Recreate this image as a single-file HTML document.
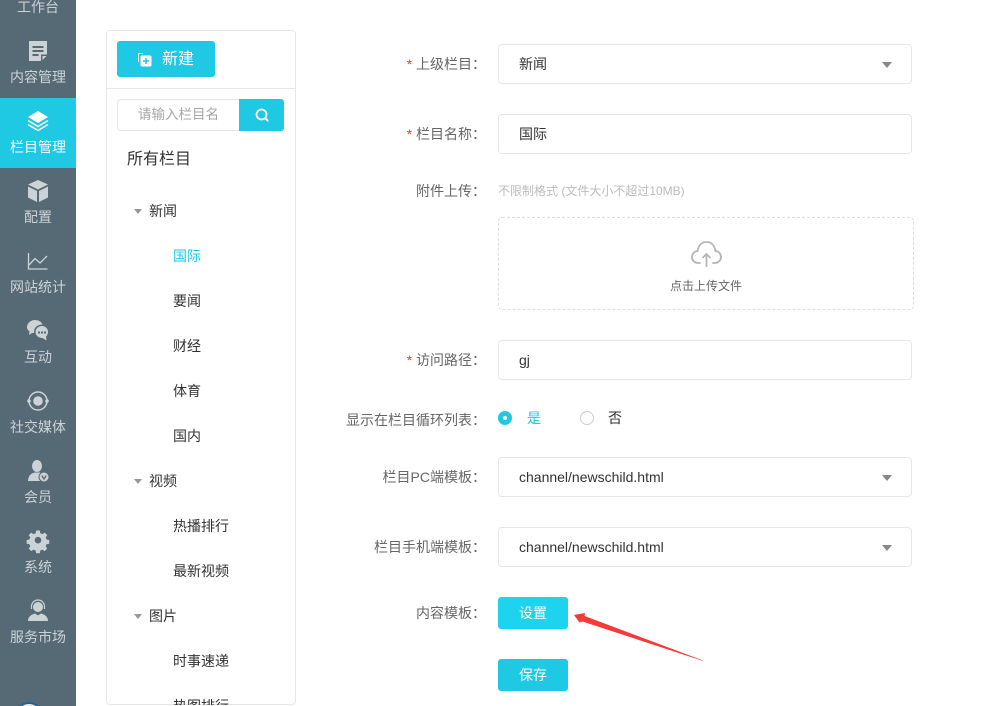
<!DOCTYPE html>
<html lang="zh">
<head>
<meta charset="utf-8">
<style>
html,body{margin:0;padding:0;background:#fff}
body{width:1006px;height:706px;position:relative;overflow:hidden;font-family:"Liberation Sans","Noto Sans CJK SC",sans-serif;font-size:14px;color:#333}
.a{position:absolute;white-space:nowrap;line-height:20px}
#nav{position:absolute;left:0;top:0;width:76px;height:706px;background:#566a75;overflow:hidden}
#nav .t{position:absolute;left:0;width:76px;text-align:center;color:#ccd3d7;line-height:20px;font-size:14px}
#nav svg{position:absolute;left:24px;width:28px;height:28px}
#act{position:absolute;left:0;top:98px;width:76px;height:70px;background:#1fc8e3}
#panel{position:absolute;left:106px;top:30px;width:188px;height:673px;border:1px solid #e6e6e6;border-radius:4px}
.btn{position:absolute;background:#1fc8e3;color:#fff;border-radius:3px;text-align:center}
.box{position:absolute;left:498px;width:412px;height:38px;border:1px solid #e6e6e6;border-radius:4px;line-height:38px;text-indent:20px;color:#333}
.lab{position:absolute;right:520px;color:#666;line-height:20px;white-space:nowrap}
.lab i{font-style:normal;color:#f33}
.tri{position:absolute;width:0;height:0;border-left:5px solid transparent;border-right:5px solid transparent;border-top:6px solid #888}
.tri2{border-left-width:4.5px;border-right-width:4.5px;border-top-width:5px;border-top-color:#999}
.l1{position:absolute;left:149px;line-height:20px;color:#333}
.l2{position:absolute;left:173px;line-height:20px;color:#333}
</style>
</head>
<body>
<div id="nav">
<div id="act"></div>
<div class="t" style="top:-3px">工作台</div>

<svg style="top:38px" viewBox="0 0 28 28"><path fill="#ccd3d7" d="M5 3h18v13l-6.500 7H5z"/><path fill="#566a75" d="M8.500 8h11v2h-11zM8.500 12h11v2h-11zM8.500 16h6v2h-6z"/><path fill="#566a75" d="M17 23v-6.500h6z"/><path fill="#ccd3d7" d="M18.500 22v-4h4z"/></svg>
<div class="t" style="top:67px">内容管理</div>

<svg style="top:107px" viewBox="0 0 28 28"><path fill="#fff" d="M14 4l10 6-10 6-10-6z"/><path fill="none" stroke="#fff" stroke-width="1.500" d="M4 13.500l10 6 10-6M4 17.500l10 6 10-6"/></svg>
<div class="t" style="top:137px;color:#fff">栏目管理</div>

<svg style="top:177px" viewBox="0 0 28 28"><path fill="#ccd3d7" d="M14 3l10 4.500-10 5-10-5z"/><path fill="#ccd3d7" d="M4 9.500l9 4.500v11l-9-4.500zM24 9.500l-9 4.500v11l9-4.500z"/></svg>
<div class="t" style="top:207px">配置</div>

<svg style="top:247px" viewBox="0 0 28 28"><path fill="none" stroke="#ccd3d7" stroke-width="1.300" d="M4.500 6v16h19"/><path fill="none" stroke="#ccd3d7" stroke-width="1.300" d="M5 18l6-6.500 5 4.500 7-7"/></svg>
<div class="t" style="top:277px">网站统计</div>

<svg style="top:317px" viewBox="0 0 28 28"><path fill="#ccd3d7" d="M11 3c4 0 6.500 2 7.500 4.500C13 7.500 9.500 11 10 16l-2 0-3 2 .5-3.500C3.500 13 3 11.500 3 10c0-4 4-7 8-7z"/><path fill="#ccd3d7" d="M18 9c3.500 0 6 2.500 6 6 0 2-.8 3.500-2 4.500l.5 4-4-2.500c-4 0-7-2.500-7-6s3-6 6.500-6z"/><path fill="#566a75" d="M14 14.500h2v2h-2zM17 14.500h2v2h-2zM20 14.500h2v2h-2z"/></svg>
<div class="t" style="top:347px">互动</div>

<svg style="top:387px" viewBox="0 0 28 28"><circle cx="14" cy="14" r="9" fill="none" stroke="#ccd3d7" stroke-width="1.500"/><circle cx="14" cy="14" r="4.800" fill="#ccd3d7"/><circle cx="5" cy="14" r="1.800" fill="#ccd3d7"/><circle cx="23" cy="14" r="1.800" fill="#ccd3d7"/></svg>
<div class="t" style="top:417px">社交媒体</div>

<svg style="top:457px" viewBox="0 0 28 28"><ellipse cx="13" cy="9" rx="5" ry="6" fill="#ccd3d7"/><path fill="#ccd3d7" d="M4 24c0-5 3-7.500 6.500-8.500h5C18 16.500 19 18 19 24z"/><circle cx="20" cy="20" r="5" fill="#ccd3d7" stroke="#566a75" stroke-width="1"/><path fill="none" stroke="#566a75" stroke-width="1.300" d="M17.800 18.500l2.200 3.500 2.200-3.500"/></svg>
<div class="t" style="top:487px">会员</div>

<svg style="top:527px" viewBox="0 0 28 28"><path fill="#ccd3d7" fill-rule="evenodd" d="M12 3.500h4l.6 3 2.300 1 2.600-1.700 2.800 2.800-1.700 2.600 1 2.300 2.900.6v4l-3 .6-1 2.300 1.700 2.600-2.800 2.800-2.600-1.700-2.200 1-.6 3h-4l-.6-3-2.300-1-2.600 1.700-2.800-2.800 1.700-2.600-1-2.300-3-.6v-4l3-.6 1-2.300-1.700-2.600 2.800-2.800 2.600 1.700 2.300-1zM14 10.500a3.700 3.700 0 1 0 0 7.400 3.700 3.700 0 0 0 0-7.400z" transform="translate(1.400 .4) scale(.9)"/></svg>
<div class="t" style="top:557px">系统</div>

<svg style="top:597px" viewBox="0 0 28 28"><circle cx="14" cy="10" r="5" fill="#ccd3d7"/><path fill="none" stroke="#ccd3d7" stroke-width="1.200" d="M7.500 12V9.500a6.500 6.500 0 0 1 13 0V12"/><path fill="#ccd3d7" d="M4 24c0-4 3-6.500 7-7.500l3 2 3-2c4 1 7 3.500 7 7.500z"/></svg>
<div class="t" style="top:627px">服务市场</div>

<div style="position:absolute;left:15px;top:702px;width:24px;height:24px;border-radius:50%;background:#e6edf2;border:2px solid #2c5f8a"></div>
</div>

<div id="panel"></div>
<div style="position:absolute;left:107px;top:88px;width:188px;height:1px;background:#e6e6e6"></div>
<div class="btn" style="left:117px;top:41px;width:98px;height:36px"></div>
<svg style="position:absolute;left:137px;top:52px" width="16" height="16" viewBox="0 0 16 16"><path fill="none" stroke="#fff" stroke-width="1" d="M6 1.500H2.500a1 1 0 0 0-1 1V10"/><rect x="3.500" y="3.500" width="11" height="11" rx="1.500" fill="#fff"/><path fill="none" stroke="#1fc8e3" stroke-width="1.500" d="M9 6v6M6 9h6"/></svg>
<div class="a" style="left:162px;top:50px;color:#fff;font-size:16px">新建</div>

<div style="position:absolute;left:117px;top:99px;width:123px;height:30px;border:1px solid #e6e6e6;border-right:0;border-radius:4px 0 0 4px"></div>
<div class="a" style="left:138px;top:105px;color:#a5a5a5;font-size:13.500px">请输入栏目名</div>
<div style="position:absolute;left:239px;top:99px;width:45px;height:32px;background:#1fc8e3;border-radius:0 3px 3px 0"></div>
<svg style="position:absolute;left:254px;top:107px" width="16" height="16" viewBox="0 0 16 16"><circle cx="7.500" cy="7.500" r="5" fill="none" stroke="#fff" stroke-width="1.800"/><path stroke="#fff" stroke-width="2" d="M11 11l3.200 3.200"/></svg>

<div class="a" style="left:127px;top:150px;font-size:16px;color:#333">所有栏目</div>

<div class="tri tri2" style="left:134px;top:209px"></div><div class="l1" style="top:201px">新闻</div>
<div class="l2" style="top:246px;color:#1fc8e3">国际</div>
<div class="l2" style="top:291px">要闻</div>
<div class="l2" style="top:336px">财经</div>
<div class="l2" style="top:381px">体育</div>
<div class="l2" style="top:426px">国内</div>
<div class="tri tri2" style="left:134px;top:479px"></div><div class="l1" style="top:471px">视频</div>
<div class="l2" style="top:516px">热播排行</div>
<div class="l2" style="top:561px">最新视频</div>
<div class="tri tri2" style="left:134px;top:614px"></div><div class="l1" style="top:606px">图片</div>
<div class="l2" style="top:651px">时事速递</div>
<div style="position:absolute;left:107px;top:696px;width:188px;height:9px;overflow:hidden"><div class="l2" style="left:66px;top:0;margin-top:0">热图排行</div></div>

<div class="lab" style="top:54px"><i>*</i> 上级栏目：</div>
<div class="box" style="top:44px">新闻</div>
<div class="tri" style="left:882px;top:62px"></div>

<div class="lab" style="top:124px"><i>*</i> 栏目名称：</div>
<div class="box" style="top:114px">国际</div>

<div class="lab" style="top:181px">附件上传：</div>
<div class="a" style="left:498px;top:181px;font-size:12px;color:#bbb">不限制格式 (文件大小不超过10MB)</div>
<div style="position:absolute;left:498px;top:217px;width:414px;height:91px;border:1px dashed #ddd;border-radius:4px"></div>
<svg style="position:absolute;left:690px;top:239px" width="33" height="30" viewBox="0 0 33 30"><path fill="none" stroke="#b5b5b5" stroke-width="1.800" stroke-linecap="round" d="M10 24H8.500a6 6 0 0 1-1-12C8.500 6 12 3 16.500 3S24.500 6 25.500 12a6 6 0 0 1-1 12H23"/><path fill="none" stroke="#b5b5b5" stroke-width="1.800" d="M16.500 28V15M12.500 19l4-4 4 4"/></svg>
<div class="a" style="left:670px;top:276px;font-size:12px;color:#666">点击上传文件</div>

<div class="lab" style="top:350px"><i>*</i> 访问路径：</div>
<div class="box" style="top:340px">gj</div>

<div class="lab" style="top:410px">显示在栏目循环列表：</div>
<div style="position:absolute;left:498px;top:411px;width:14px;height:14px;border-radius:50%;background:#1fc8e3"></div>
<div style="position:absolute;left:503px;top:416px;width:4px;height:4px;border-radius:50%;background:#fff"></div>
<div class="a" style="left:527px;top:408px;color:#1fc8e3">是</div>
<div style="position:absolute;left:580px;top:411px;width:12px;height:12px;border-radius:50%;border:1px solid #ccc"></div>
<div class="a" style="left:608px;top:408px;color:#333">否</div>

<div class="lab" style="top:467px">栏目PC端模板：</div>
<div class="box" style="top:457px">channel/newschild.html</div>
<div class="tri" style="left:882px;top:475px"></div>

<div class="lab" style="top:537px">栏目手机端模板：</div>
<div class="box" style="top:527px">channel/newschild.html</div>
<div class="tri" style="left:882px;top:545px"></div>

<div class="lab" style="top:603px">内容模板：</div>
<div class="btn" style="left:498px;top:597px;width:70px;height:32px;line-height:32px;background:#1dd3ee">设置</div>
<div class="btn" style="left:498px;top:659px;width:70px;height:32px;line-height:32px">保存</div>

<svg style="position:absolute;left:570px;top:608px" width="140" height="60" viewBox="0 0 140 60"><path fill="#f8393a" d="M4 7L15 5l-.5 3L133 52.500l-.2.400L12.500 13.500 9.500 14.500z"/></svg>
</body>
</html>
